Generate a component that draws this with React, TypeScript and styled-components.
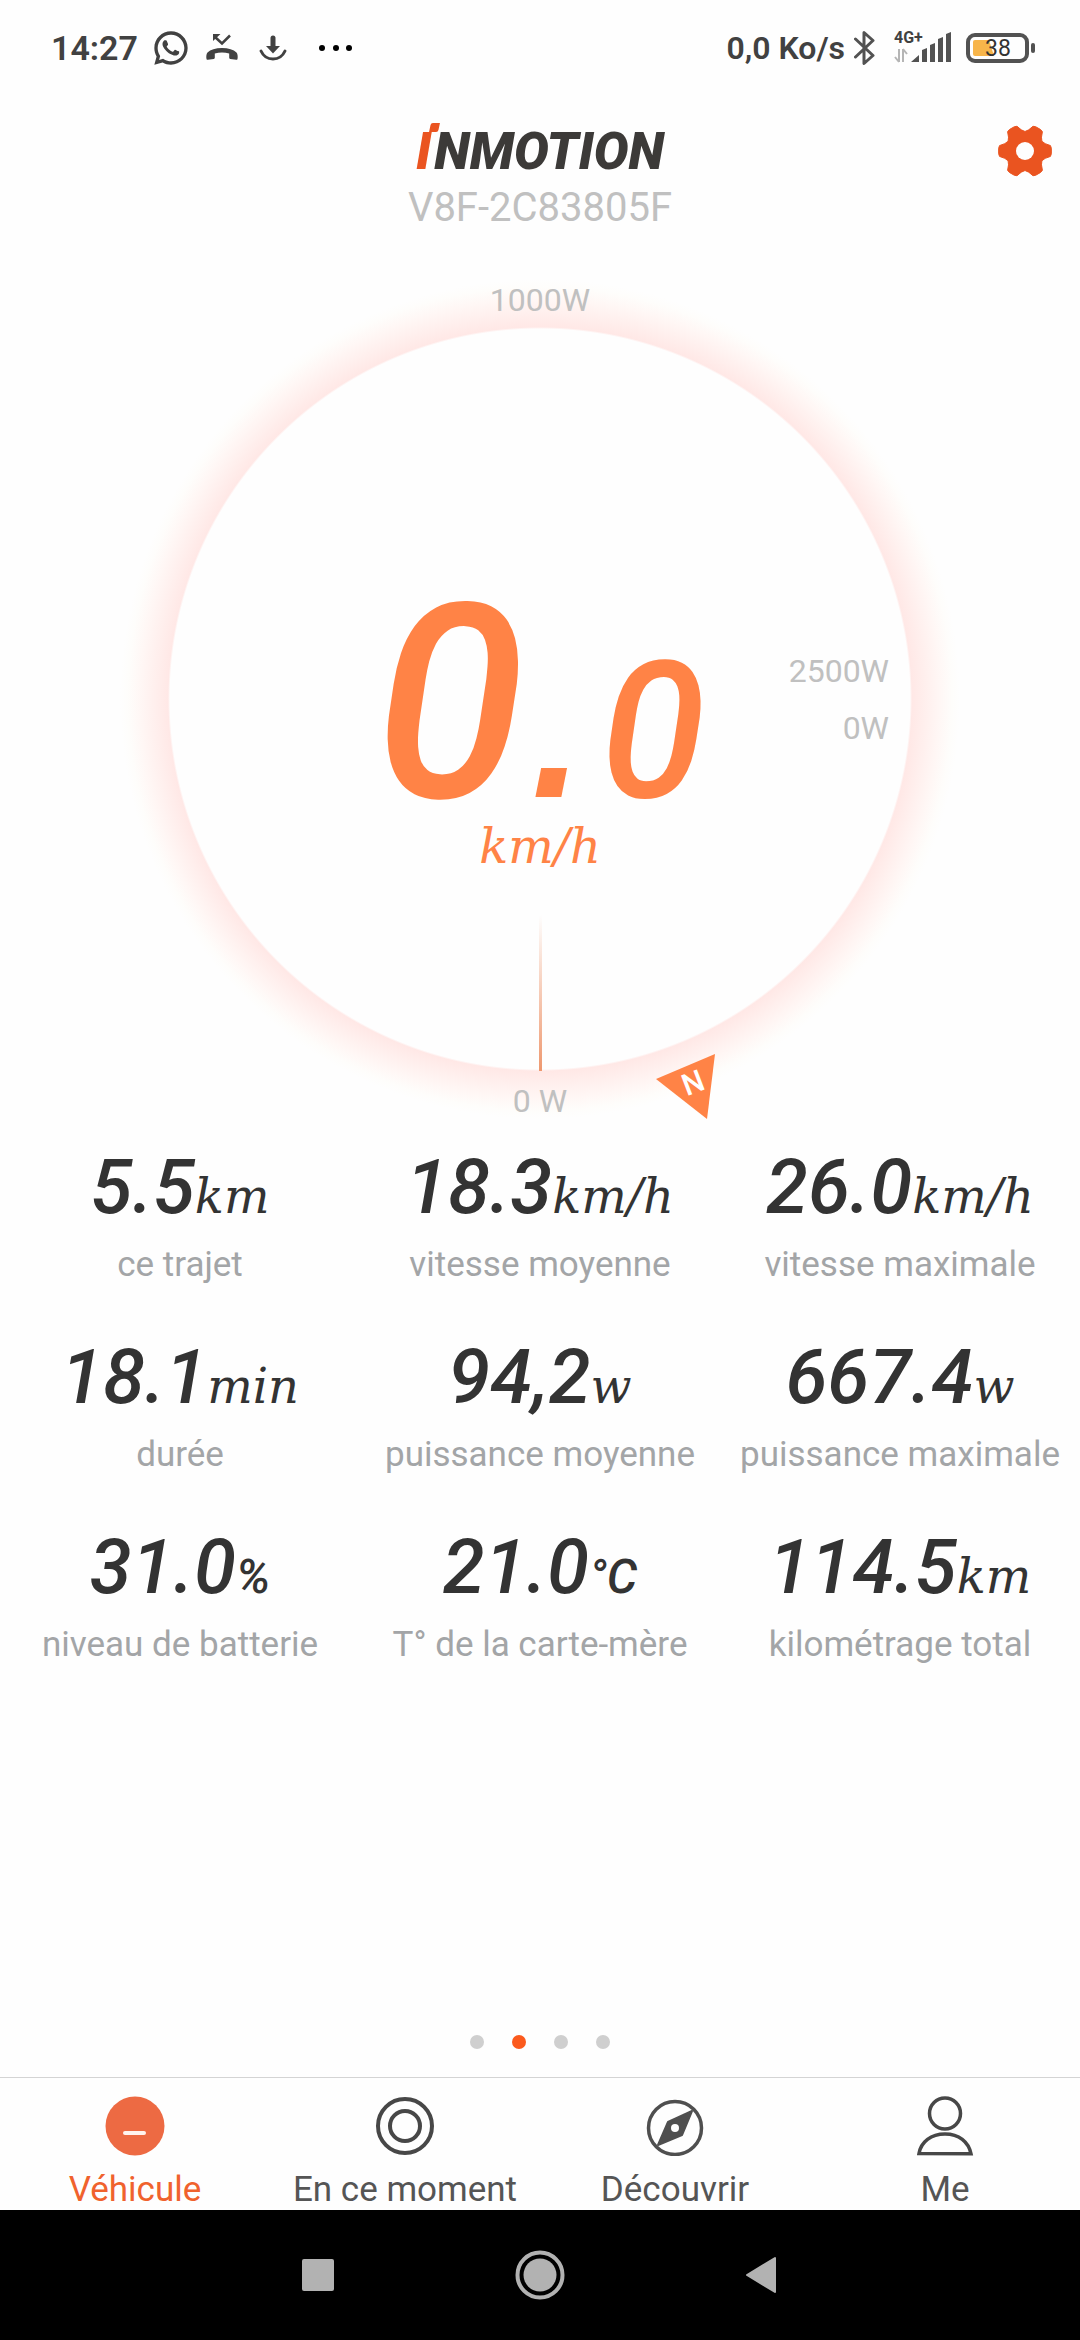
import React from 'react';
import styled, { createGlobalStyle } from 'styled-components';
import { RiWhatsappLine } from 'react-icons/ri';

const GlobalStyle = createGlobalStyle`
  *, *::before, *::after { box-sizing: border-box; }
  body { margin: 0; background: #fefefe; font-family: Roboto, "Noto Sans", sans-serif; }
  button { margin: 0; padding: 0; border: 0; background: none; font: inherit; color: inherit; cursor: pointer; }
  svg { display: block; flex: none; }
`;

const accent = '#ff8346';
const brand = '#ea5420';
const ink = '#333333';
const statusInk = '#414141';
const slab = '"DejaVu Serif", serif';

const Screen = styled.div`
  display: flex;
  flex-direction: column;
  min-height: 100vh;
`;

const StatusBar = styled.div`
  display: flex;
  justify-content: space-between;
  align-items: center;
  height: 96px;
  padding: 0 44px 0 51px;
  color: ${statusInk};
`;

const StatusGroup = styled.div<{ $gap: number }>`
  display: flex;
  align-items: center;
  gap: ${(p) => p.$gap}px;
`;

const StatusText = styled.span<{ $size: number }>`
  font-size: ${(p) => p.$size}px;
  line-height: 40px;
  font-weight: 600;
  white-space: pre;
`;

const Header = styled.header`
  display: grid;
  grid-template-columns: 1fr auto 1fr;
  align-items: start;
  padding: 28px 28px 44px;
`;

const Brand = styled.div`
  grid-column: 2;
  display: flex;
  flex-direction: column;
  align-items: center;
`;

const Wordmark = styled.h1`
  margin: 0;
  color: #3c3a38;
  font-size: 52px;
  line-height: 56px;
  font-weight: 900;
  font-style: italic;
`;

const WordmarkInitial = styled.span`
  position: relative;
  margin-right: 3px;
  color: ${brand};

  &::before {
    content: '';
    position: absolute;
    top: 2px;
    right: -8px;
    width: 9px;
    height: 9px;
    border-radius: 2px 0;
    background: ${brand};
    transform: skewX(-12deg);
  }
`;

const DeviceName = styled.div`
  color: #c0c0c0;
  font-size: 40px;
  line-height: 56px;
`;

const SettingsButton = styled.button`
  justify-self: end;
`;

const Dial = styled.section`
  position: relative;
  align-self: center;
  display: flex;
  flex-direction: column;
  align-items: center;
  width: 840px;
  max-width: 100%;
  background: radial-gradient(
    circle at 50% 419px,
    #fefefe 370px,
    #ffe8e6 372px,
    #ffefed 385px,
    #fff7f5 400px,
    #fefdfb 412px,
    #fefefe 420px
  );
`;

const PowerLabel = styled.div<{ $line: number }>`
  color: #c0c0c0;
  font-size: 32px;
  line-height: ${(p) => p.$line}px;
`;

const Face = styled.div`
  display: grid;
  grid-template-columns: minmax(0, 1fr);
  width: 742px;
  max-width: 100%;
  height: 743px;
  margin-top: 8px;

  > * { grid-area: 1 / 1; }
`;

const Readout = styled.div`
  justify-self: center;
  display: flex;
  flex-direction: column;
  align-items: center;
  padding-top: 256px;
  color: ${accent};
`;

const Speed = styled.div`
  display: flex;
  align-items: baseline;
  height: 238px;
  font-size: 272px;
  line-height: 238px;
  font-weight: 500;
  font-style: italic;
`;

const SpeedPoint = styled.span`
  font-family: "Liberation Sans", Arial, sans-serif;
  font-weight: 400;
`;

const SpeedDecimal = styled.span`
  font-size: 190px;
`;

const SpeedUnit = styled.div`
  font-family: ${slab};
  font-size: 48px;
  line-height: 48px;
  font-style: italic;
`;

const Limits = styled.div`
  place-self: center end;
  padding-right: 22px;
  text-align: right;
`;

const Needle = styled.div`
  place-self: end center;
  width: 3px;
  height: 156px;
  background: linear-gradient(to bottom, rgba(240, 150, 108, 0), #ee986f);
`;

const Heading = styled.svg`
  position: absolute;
  left: 534px;
  top: 772px;
`;

const Stats = styled.dl`
  display: grid;
  grid-template-columns: repeat(3, minmax(0, 1fr));
  row-gap: 46px;
  margin: 14px 0 0;
`;

const Stat = styled.div`
  display: flex;
  flex-direction: column-reverse;
  align-items: center;
  gap: 12px;
`;

const StatLabel = styled.dt`
  color: #a3a5a7;
  font-size: 35px;
  line-height: 48px;
  white-space: nowrap;
`;

const StatValue = styled.dd`
  display: flex;
  align-items: baseline;
  height: 84px;
  margin: 0;
  color: ${ink};
  font-size: 76px;
  line-height: 84px;
  font-weight: 500;
  font-style: italic;
`;

const StatUnit = styled.span<{ $sans?: boolean }>`
  font-family: ${(p) => (p.$sans ? 'Roboto, sans-serif' : slab)};
  font-size: 48px;
  font-weight: ${(p) => (p.$sans ? 500 : 400)};
`;

const Pager = styled.div`
  display: flex;
  justify-content: center;
  gap: 28px;
  margin-top: auto;
  padding: 28px 0;
`;

const PagerDot = styled.button<{ $active: boolean }>`
  width: 14px;
  height: 14px;
  border-radius: 50%;
  background: ${(p) => (p.$active ? '#fb5a1d' : '#cfcfcf')};
`;

const TabBar = styled.nav`
  display: grid;
  grid-template-columns: repeat(4, minmax(0, 1fr));
  border-top: 1px solid #d4d4d4;
`;

const Tab = styled.button<{ $active: boolean }>`
  display: flex;
  flex-direction: column;
  align-items: center;
  gap: 14px;
  padding-top: 18px;
  color: ${(p) => (p.$active ? '#f0622d' : '#555555')};
  font-size: 35px;
  line-height: 40px;
  white-space: nowrap;
`;

const SystemBar = styled.div`
  display: flex;
  justify-content: center;
  background: #000000;
`;

const SystemButton = styled.button`
  display: flex;
  align-items: center;
  justify-content: center;
  width: 222px;
  height: 130px;
`;

const MissedCallIcon = () => (
  <svg width="34" height="32" viewBox="-2 0 34 32" fill={statusInk} aria-hidden="true">
    <path d="M9 5l7 6.500 8-8" fill="none" stroke={statusInk} strokeWidth="2.500" />
    <path d="M7 2h7.500L7 9z" />
    <path d="M16 16c6.500 0 11.500 1.700 14.500 4.500 1.200 1.500 1.500 4.500 1 6.500-.2.700-.7.900-1.300.8l-6-.9c-.7-.1-1-.5-1-1.200v-4.200c-4.300-1.300-10.100-1.300-14.400 0v4.200c0 .7-.3 1.100-1 1.200l-6 .9c-.6.100-1.100-.1-1.300-.8-.5-2-.2-5 1-6.500C4.500 17.700 9.500 16 16 16z" />
  </svg>
);

const DownloadIcon = () => (
  <svg width="36" height="28" viewBox="-8 0 36 28" aria-hidden="true">
    <path d="M14 4v9" stroke={statusInk} strokeWidth="5" strokeLinecap="round" />
    <path d="M7 12h14l-7 7.500z" fill={statusInk} />
    <path d="M2 17c2.500 5.500 7 8 12 8s9.500-2.500 12-8" fill="none" stroke={statusInk} strokeWidth="3" strokeLinecap="round" />
  </svg>
);

const MoreIcon = () => (
  <svg width="52" height="8" viewBox="0 0 52 8" aria-hidden="true">
    <circle cx="22" cy="4" r="3" />
    <circle cx="36" cy="4" r="3" />
    <circle cx="49" cy="4" r="3" />
  </svg>
);

const BluetoothIcon = () => (
  <svg width="22" height="36" viewBox="0 0 22 36" fill="none" stroke="#525252" strokeWidth="3" strokeLinejoin="round" aria-hidden="true">
    <path d="M1.500 9L19 25.500 10 33.500V2.500l9 8L1.500 27" strokeLinecap="round" />
  </svg>
);

const SignalIcon = () => (
  <svg width="62" height="46" viewBox="-4 -6 62 46" aria-hidden="true">
    <text x="0" y="12" fontFamily="Roboto, sans-serif" fontSize="16" fontWeight="700" fill={statusInk}>4G+</text>
    <path d="M5 18v13M5 31l-4-5M9 31V18M9 18l4 5" fill="none" stroke="#b5b5b5" strokeWidth="2" />
    <path d="M17 31l8-7v7zM28 19l5-2v14h-5zM36 14l5-2v19h-5zM44 8l5-2v25h-5zM52 3l5-2v30h-5z" fill="#525252" />
  </svg>
);

const BatteryIcon = () => (
  <svg width="70" height="32" viewBox="0 0 70 32" aria-hidden="true">
    <rect x="2" y="3" width="59" height="26" rx="7" fill="none" stroke="#525252" strokeWidth="4" />
    <path d="M9 8h14l5 16H9a2 2 0 0 1-2-2V10a2 2 0 0 1 2-2z" fill="#f7b54a" />
    <rect x="65" y="11" width="4" height="10" rx="2" fill="#525252" />
    <text x="19" y="24" fontFamily="Roboto, sans-serif" fontSize="23" fill="#333333">38</text>
  </svg>
);

// Six teeth, each outlined by a blunt tip, two flanks and a shared valley.
const gearProfile: Array<[number, number]> = [
  [-20, 21.5], [-12, 26], [-6, 26.5], [6, 26.5], [12, 26], [20, 21.5], [30, 19.5],
];
const gearPoints = Array.from({ length: 6 }, (_, tooth) =>
  gearProfile.map(([angle, radius]) => {
    const a = ((tooth * 60 + angle) * Math.PI) / 180;
    return `${(27 + radius * Math.cos(a)).toFixed(2)},${(27 + radius * Math.sin(a)).toFixed(2)}`;
  }).join(' '),
).join(' ');

const GearIcon = () => (
  <svg width="54" height="54" viewBox="0 0 54 54" aria-hidden="true">
    <polygon points={gearPoints} fill={brand} stroke={brand} strokeWidth="1" strokeLinejoin="round" />
    <circle cx="27" cy="27" r="9" fill="#fefefe" />
  </svg>
);

const VehicleIcon = () => (
  <svg width="60" height="60" viewBox="0 0 60 60" aria-hidden="true">
    <circle cx="30" cy="30" r="29.500" fill="#ed6a43" />
    <path d="M20 37h19" stroke="#fff3ee" strokeWidth="4" strokeLinecap="round" />
  </svg>
);

const MomentIcon = () => (
  <svg width="60" height="60" viewBox="0 0 60 60" fill="none" stroke="#474747" strokeWidth="4" aria-hidden="true">
    <circle cx="30" cy="30" r="27" />
    <circle cx="30" cy="30" r="15" />
  </svg>
);

const DiscoverIcon = () => (
  <svg width="60" height="60" viewBox="0 0 60 60" aria-hidden="true">
    <circle cx="30" cy="32" r="26.500" fill="none" stroke="#4f4f4f" strokeWidth="3.500" />
    <path d="M47 15L23 26 13 49l24-10z" fill="#4f4f4f" stroke="#4f4f4f" strokeWidth="2" strokeLinejoin="round" />
    <circle cx="30" cy="32" r="4" fill="#fefefe" />
  </svg>
);

const ProfileIcon = () => (
  <svg width="60" height="60" viewBox="0 0 60 60" fill="none" stroke="#474747" strokeWidth="3.500" aria-hidden="true">
    <circle cx="30" cy="17.500" r="15.500" />
    <path d="M4 57.500C6 46 16 38 30 38s23.500 8 26 19.800z" />
  </svg>
);

const stats = [
  { value: '5.5', unit: 'km', label: 'ce trajet' },
  { value: '18.3', unit: 'km/h', label: 'vitesse moyenne' },
  { value: '26.0', unit: 'km/h', label: 'vitesse maximale' },
  { value: '18.1', unit: 'min', label: 'durée' },
  { value: '94,2', unit: 'w', label: 'puissance moyenne' },
  { value: '667.4', unit: 'w', label: 'puissance maximale' },
  { value: '31.0', unit: '%', label: 'niveau de batterie', sans: true },
  { value: '21.0', unit: '°C', label: 'T° de la carte-mère', sans: true },
  { value: '114.5', unit: 'km', label: 'kilométrage total' },
];

const tabs = [
  { label: 'Véhicule', Icon: VehicleIcon },
  { label: 'En ce moment', Icon: MomentIcon },
  { label: 'Découvrir', Icon: DiscoverIcon },
  { label: 'Me', Icon: ProfileIcon },
];

export default function App() {
  const [page, setPage] = React.useState(1);
  const [tab, setTab] = React.useState(0);

  return (
    <Screen>
      <GlobalStyle />
      <StatusBar>
        <StatusGroup $gap={13}>
          <StatusText $size={34}>14:27</StatusText>
          <RiWhatsappLine size={40} aria-hidden="true" />
          <MissedCallIcon />
          <DownloadIcon />
          <MoreIcon />
        </StatusGroup>
        <StatusGroup $gap={14}>
          <StatusGroup $gap={9}>
            <StatusText $size={32}>0,0 Ko/s</StatusText>
            <BluetoothIcon />
          </StatusGroup>
          <SignalIcon />
          <BatteryIcon />
        </StatusGroup>
      </StatusBar>

      <Header>
        <Brand>
          <Wordmark>
            <WordmarkInitial>I</WordmarkInitial>NMOTION
          </Wordmark>
          <DeviceName>V8F-2C83805F</DeviceName>
        </Brand>
        <SettingsButton type="button" aria-label="Paramètres">
          <GearIcon />
        </SettingsButton>
      </Header>

      <Dial>
        <PowerLabel $line={40}>1000W</PowerLabel>
        <Face>
          <Readout>
            <Speed>
              <span>0</span>
              <SpeedPoint>.</SpeedPoint>
              <SpeedDecimal>0</SpeedDecimal>
            </Speed>
            <SpeedUnit>km/h</SpeedUnit>
          </Readout>
          <Limits>
            <PowerLabel $line={57}>2500W</PowerLabel>
            <PowerLabel $line={57}>0W</PowerLabel>
          </Limits>
          <Needle />
        </Face>
        <PowerLabel $line={60}>0 W</PowerLabel>
        <Heading width="64" height="68" viewBox="0 0 64 68">
          <path d="M2 27L61 2 53 67z" fill={accent} />
          <text
            x="39"
            y="41"
            textAnchor="middle"
            transform="rotate(-21 39 31)"
            fontFamily="Roboto, sans-serif"
            fontSize="30"
            fontWeight="500"
            fill="#ffffff"
          >
            N
          </text>
        </Heading>
      </Dial>

      <Stats>
        {stats.map((s) => (
          <Stat key={s.label}>
            <StatLabel>{s.label}</StatLabel>
            <StatValue>
              {s.value}
              <StatUnit $sans={s.sans}>{s.unit}</StatUnit>
            </StatValue>
          </Stat>
        ))}
      </Stats>

      <Pager>
        {[0, 1, 2, 3].map((i) => (
          <PagerDot key={i} type="button" $active={i === page} aria-label={`Page ${i + 1}`} onClick={() => setPage(i)} />
        ))}
      </Pager>

      <TabBar>
        {tabs.map(({ label, Icon }, i) => (
          <Tab key={label} type="button" $active={i === tab} onClick={() => setTab(i)}>
            <Icon />
            <span>{label}</span>
          </Tab>
        ))}
      </TabBar>

      <SystemBar>
        <SystemButton type="button" aria-label="Applications récentes">
          <svg width="32" height="32" viewBox="0 0 32 32" aria-hidden="true">
            <rect width="32" height="32" rx="2" fill="#b2b2b2" />
          </svg>
        </SystemButton>
        <SystemButton type="button" aria-label="Accueil">
          <svg width="50" height="50" viewBox="0 0 50 50" aria-hidden="true">
            <circle cx="25" cy="25" r="22.500" fill="none" stroke="#b2b2b2" strokeWidth="4" />
            <circle cx="25" cy="25" r="16.500" fill="#b2b2b2" />
          </svg>
        </SystemButton>
        <SystemButton type="button" aria-label="Retour">
          <svg width="34" height="38" viewBox="0 0 34 38" aria-hidden="true">
            <path d="M2 19L30 2v34z" fill="#b2b2b2" stroke="#b2b2b2" strokeWidth="2" strokeLinejoin="round" />
          </svg>
        </SystemButton>
      </SystemBar>
    </Screen>
  );
}
